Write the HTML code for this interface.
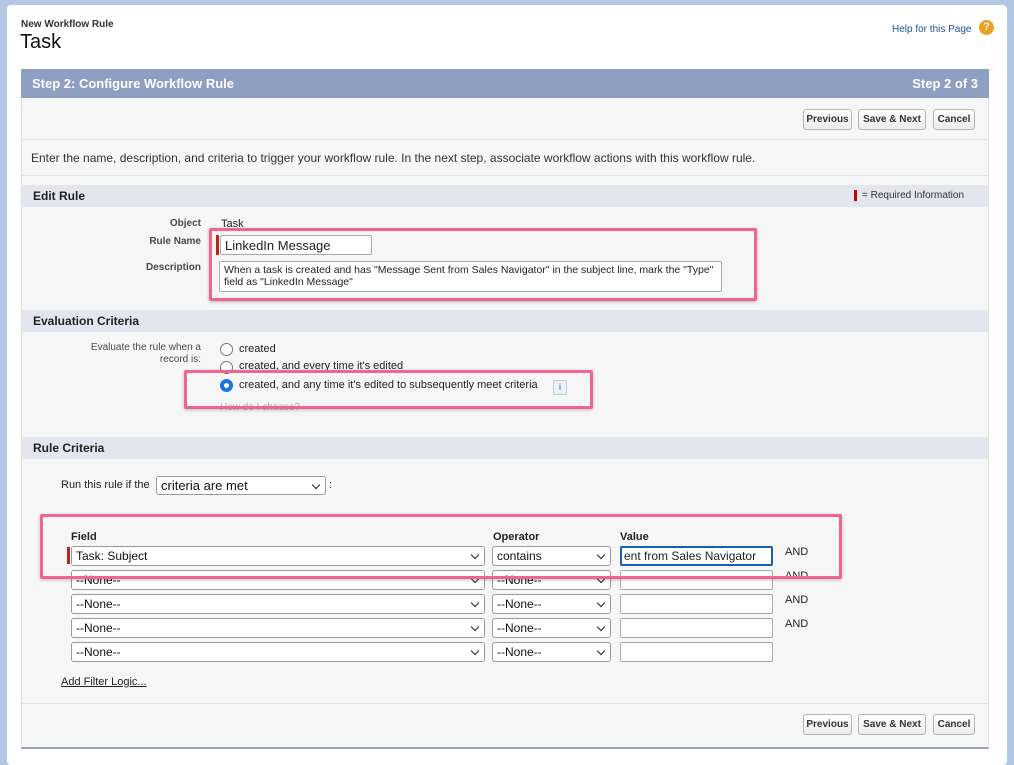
<!DOCTYPE html>
<html><head><meta charset="utf-8"><style>
*{box-sizing:border-box;margin:0;padding:0}
body{width:1014px;height:756px;background:#b4c7e4;font-family:"Liberation Sans",Arial,sans-serif;position:relative;overflow:hidden;color:#222}
.a{position:absolute}
.card{left:7px;top:5px;width:1000px;height:760px;background:#fff;border-radius:4px}
.box{left:21px;top:69px;width:968px;height:680px;background:#f6f6f6;border-bottom:2px solid #99a3b8;border-left:1px solid #e0e0e0;border-right:1px solid #e0e0e0}
.hdr{background:#8e9fc1;color:#fff;font-weight:bold;font-size:13px}
.sec{background:#e3e6ef;font-weight:bold;font-size:12px;color:#222;padding-left:11px;line-height:22px}
.btn{height:21px;border:1px solid #b5b5b5;border-radius:3px;background:linear-gradient(#fff,#ececec);font-size:10px;font-weight:bold;color:#333;text-align:center;line-height:19px}
.lbl{font-size:10px;font-weight:bold;color:#4a4a4a;text-align:right}
.t{font-size:11px;color:#222}
.inp{background:#fff;border:1px solid #aaa;border-radius:2px}
.sel{background:#fff;border:1px solid #999;border-radius:3px;font-size:12px;color:#111;padding-left:4px;line-height:18px}
.sel:after{content:"";position:absolute;right:6px;top:5px;width:5px;height:5px;border-right:1.5px solid #222;border-bottom:1.5px solid #222;transform:rotate(45deg)}
.pink{border:3px solid #f0648e;border-radius:2px;box-shadow:0 1px 3px rgba(0,0,0,.25)}
.radio{width:13px;height:13px;border:1px solid #777;border-radius:50%;background:#fff}
.and{font-size:11px;color:#222}
</style></head><body>
<div class="a card"></div>
<div class="a" style="left:21px;top:19px;font-size:10px;font-weight:bold;color:#333">New Workflow Rule</div>
<div class="a" style="left:20px;top:31px;font-size:20px;color:#111">Task</div>
<div class="a" style="left:892px;top:24px;font-size:10px;color:#1b5297">Help for this Page</div>
<div class="a" style="left:979px;top:20px;width:15px;height:15px;border-radius:50%;background:#f0a020;color:#fff;font-size:11px;font-weight:bold;text-align:center;line-height:15px">?</div>

<div class="a box"></div>
<div class="a hdr" style="left:21px;top:69px;width:968px;height:29px">
 <span class="a" style="left:11px;top:7px">Step 2: Configure Workflow Rule</span>
 <span class="a" style="right:11px;top:7px">Step 2 of 3</span>
</div>
<div class="a btn" style="left:803px;top:109px;width:49px">Previous</div>
<div class="a btn" style="left:858px;top:109px;width:68px">Save &amp; Next</div>
<div class="a btn" style="left:933px;top:109px;width:42px">Cancel</div>
<div class="a" style="left:21px;top:139px;width:968px;border-top:1px solid #e2e2e2"></div>
<div class="a" style="left:31px;top:151px;font-size:12px;color:#333">Enter the name, description, and criteria to trigger your workflow rule. In the next step, associate workflow actions with this workflow rule.</div>
<div class="a" style="left:21px;top:175px;width:968px;border-top:1px solid #e2e2e2"></div>

<div class="a sec" style="left:22px;top:185px;width:966px;height:22px">Edit Rule</div>
<div class="a" style="left:854px;top:190px;width:3px;height:11px;background:#c00"></div>
<div class="a" style="left:862px;top:190px;font-size:10px;color:#333">= Required Information</div>
<div class="a lbl" style="left:100px;top:218px;width:101px">Object</div>
<div class="a t" style="left:221px;top:218px">Task</div>
<div class="a lbl" style="left:100px;top:236px;width:101px">Rule Name</div>
<div class="a" style="left:216px;top:235px;width:3px;height:20px;background:#b02a1a"></div>
<div class="a inp" style="left:220px;top:235px;width:152px;height:20px;font-size:13px;padding:2px 4px">LinkedIn Message</div>
<div class="a lbl" style="left:100px;top:262px;width:101px">Description</div>
<div class="a inp" style="left:219px;top:261px;width:503px;height:31px;font-size:10.5px;line-height:12px;padding:2px 4px">When a task is created and has "Message Sent from Sales Navigator" in the subject line, mark the "Type" field as "LinkedIn Message"</div>
<div class="a pink" style="left:209px;top:228px;width:548px;height:73px"></div>

<div class="a sec" style="left:22px;top:310px;width:966px;height:22px">Evaluation Criteria</div>
<div class="a lbl" style="left:60px;top:342px;width:141px;font-weight:normal;line-height:12px">Evaluate the rule when a record is:</div>
<div class="a radio" style="left:220px;top:343px"></div><div class="a t" style="left:239px;top:343px">created</div>
<div class="a radio" style="left:220px;top:361px"></div><div class="a t" style="left:239px;top:360px">created, and every time it's edited</div>
<div class="a radio" style="left:220px;top:379px;border:4px solid #1a73e8"></div><div class="a t" style="left:239px;top:379px">created, and any time it's edited to subsequently meet criteria</div>
<div class="a" style="left:553px;top:380px;width:14px;height:15px;border:1px solid #bcd;border-radius:2px;background:#eef3fb;color:#1b5297;font-size:9px;text-align:center;line-height:13px">i</div>
<div class="a" style="left:220px;top:402px;font-size:10px;color:#aaa">How do I choose?</div>
<div class="a pink" style="left:184px;top:370px;width:409px;height:39px"></div>

<div class="a sec" style="left:22px;top:437px;width:966px;height:22px">Rule Criteria</div>
<div class="a t" style="left:61px;top:479px">Run this rule if the</div>
<div class="a sel" style="left:156px;top:476px;width:170px;height:19px;font-size:13px">criteria are met</div>
<div class="a t" style="left:329px;top:479px">:</div>

<div class="a" style="left:71px;top:531px;font-size:11px;font-weight:bold">Field</div>
<div class="a" style="left:493px;top:531px;font-size:11px;font-weight:bold">Operator</div>
<div class="a" style="left:620px;top:531px;font-size:11px;font-weight:bold">Value</div>
<div class="a" style="left:67px;top:547px;width:3px;height:17px;background:#b02a1a"></div>

<div class="a sel" style="left:71px;top:546px;width:414px;height:20px">Task: Subject</div>
<div class="a sel" style="left:492px;top:546px;width:119px;height:20px">contains</div>
<div class="a inp" style="left:620px;top:546px;width:153px;height:20px;border:2px solid #1a5fb4;font-size:12px;line-height:16px;padding-left:2px;white-space:nowrap;overflow:hidden">ent from Sales Navigator</div>
<div class="a and" style="left:785px;top:546px">AND</div>

<div class="a sel" style="left:71px;top:570px;width:414px;height:20px">--None--</div>
<div class="a sel" style="left:492px;top:570px;width:119px;height:20px">--None--</div>
<div class="a inp" style="left:620px;top:570px;width:153px;height:20px"></div>
<div class="a and" style="left:785px;top:570px">AND</div>

<div class="a sel" style="left:71px;top:594px;width:414px;height:20px">--None--</div>
<div class="a sel" style="left:492px;top:594px;width:119px;height:20px">--None--</div>
<div class="a inp" style="left:620px;top:594px;width:153px;height:20px"></div>
<div class="a and" style="left:785px;top:594px">AND</div>

<div class="a sel" style="left:71px;top:618px;width:414px;height:20px">--None--</div>
<div class="a sel" style="left:492px;top:618px;width:119px;height:20px">--None--</div>
<div class="a inp" style="left:620px;top:618px;width:153px;height:20px"></div>
<div class="a and" style="left:785px;top:618px">AND</div>

<div class="a sel" style="left:71px;top:642px;width:414px;height:20px">--None--</div>
<div class="a sel" style="left:492px;top:642px;width:119px;height:20px">--None--</div>
<div class="a inp" style="left:620px;top:642px;width:153px;height:20px"></div>

<div class="a pink" style="left:40px;top:514px;width:802px;height:65px"></div>

<div class="a" style="left:61px;top:676px;font-size:11px;color:#222;text-decoration:underline">Add Filter Logic...</div>
<div class="a" style="left:21px;top:703px;width:968px;border-top:1px solid #e0e0e0"></div>
<div class="a btn" style="left:803px;top:714px;width:49px">Previous</div>
<div class="a btn" style="left:858px;top:714px;width:68px">Save &amp; Next</div>
<div class="a btn" style="left:933px;top:714px;width:42px">Cancel</div>
</body></html>
